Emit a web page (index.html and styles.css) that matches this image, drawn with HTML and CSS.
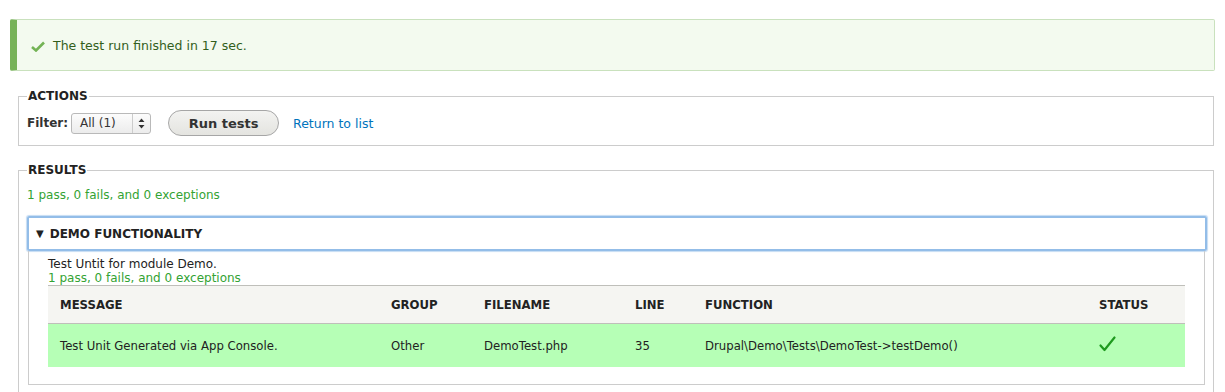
FILE: index.html
```html
<!DOCTYPE html>
<html lang="en">
  <head>
    <meta charset="UTF-8" />
    <title>Test result</title>
    <link rel="stylesheet" href="styles.css">
  </head>
  <body>
    <div class="page">
      <div class="messages">
        <svg class="msg-icon" width="14" height="11" viewBox="0 0 14 11">
          <path d="M1 6 L5 9.5 L13 1.5" fill="none" stroke="#73b355" stroke-width="2.6" />
        </svg>
        <span>The test run finished in 17 sec.</span>
      </div>

      <fieldset class="box actions">
        <legend>Actions</legend>
        <div class="action-row">
          <label class="filter-label">Filter:</label>
          <span class="select">
            <span class="select-value">All (1)</span>
            <span class="select-arrows">
              <svg width="7" height="11" viewBox="0 0 7 11">
                <path d="M3.5 0.5 L6.5 4 L0.5 4 Z M3.5 10.5 L6.5 7 L0.5 7 Z" fill="#333" />
              </svg>
            </span>
          </span>
          <button class="button">Run tests</button>
          <a class="link" href="#">Return to list</a>
        </div>
      </fieldset>

      <fieldset class="box results">
        <legend>Results</legend>
        <div class="pass">1 pass, 0 fails, and 0 exceptions</div>

        <div class="details">
          <div class="summary"><span class="tri">&#9660;</span>Demo functionality</div>
          <div class="details-body">
            <div class="desc">Test Untit for module Demo.</div>
            <div class="pass">1 pass, 0 fails, and 0 exceptions</div>
            <table class="result-table">
              <thead>
                <tr>
                  <th class="c-msg">Message</th>
                  <th class="c-group">Group</th>
                  <th class="c-file">Filename</th>
                  <th class="c-line">Line</th>
                  <th class="c-func">Function</th>
                  <th class="c-status">Status</th>
                </tr>
              </thead>
              <tbody>
                <tr class="row-pass">
                  <td>Test Unit Generated via App Console.</td>
                  <td>Other</td>
                  <td>DemoTest.php</td>
                  <td>35</td>
                  <td>Drupal\Demo\Tests\DemoTest-&gt;testDemo()</td>
                  <td>
                    <svg width="17" height="16" viewBox="0 0 17 16">
                      <path d="M1.5 9.5 L5.5 14 L15.5 1.5" fill="none" stroke="#1f9a1f" stroke-width="2.2" stroke-linecap="round" stroke-linejoin="round" />
                    </svg>
                  </td>
                </tr>
              </tbody>
            </table>
          </div>
        </div>
      </fieldset>
    </div>
  </body>
</html>
```

FILE: styles.css
```css
html,
body {
  margin: 0;
  background: #fff;
}
body {
  font-family: "DejaVu Sans", "Liberation Sans", sans-serif;
  font-size: 12px;
  color: #333;
}
.page {
  padding: 19px 10px 0 10px;
}
/* status message */
.messages {
  display: flex;
  align-items: center;
  height: 50px;
  border: 1px solid #c9e1bd;
  border-left: 7px solid #77b259;
  border-radius: 2px;
  background: #f3faef;
  color: #325e1c;
  padding-left: 14px;
  font-size: 12.5px;
}
.msg-icon {
  margin-right: 8px;
  margin-top: 2px;
}
/* fieldsets */
.box {
  margin: 18px 1px 0 8px;
  padding: 0 6px 0 8px;
  border: 1px solid #ccc;
}
.box legend {
  padding: 0 1px;
  font-weight: bold;
  text-transform: uppercase;
  color: #222;
}
.actions {
  padding-bottom: 9px;
}
.action-row {
  display: flex;
  align-items: center;
  margin-top: 7px;
}
.filter-label {
  font-weight: bold;
  margin-right: 3px;
}
.select {
  display: flex;
  align-items: center;
  width: 78px;
  height: 19px;
  border: 1px solid #b9b9b9;
  border-radius: 3px;
  background: linear-gradient(#fcfcfc, #ececec);
}
.select-value {
  flex: 1;
  padding-left: 8px;
}
.select-arrows {
  display: flex;
  align-items: center;
  justify-content: center;
  width: 17px;
  height: 100%;
  border-left: 1px solid #ccc;
}
.button {
  margin-left: 17px;
  width: 111px;
  height: 26px;
  border: 1px solid #a6a6a6;
  border-radius: 14px;
  background: linear-gradient(#f3f3f1, #e4e4e0);
  font-family: inherit;
  font-size: 13px;
  font-weight: bold;
  color: #333;
}
.link {
  margin-left: 14px;
  color: #0074bd;
  text-decoration: none;
  font-size: 12.5px;
}
.results {
  margin-top: 17px;
  padding-bottom: 40px;
}
.pass {
  color: #33a333;
}
.results > .pass {
  margin-top: 11px;
}
/* collapsible block */
.details {
  margin-top: 14px;
}
.summary {
  box-sizing: border-box;
  height: 35px;
  display: flex;
  align-items: center;
  border: 2px solid #93bde8;
  border-radius: 2px;
  box-shadow: 0 0 1px 1px #c5dcf3;
  padding-left: 7px;
  font-weight: bold;
  text-transform: uppercase;
  color: #222;
}
.tri {
  font-size: 10px;
  margin-right: 6px;
}
.details-body {
  margin: 0 2px 0 1px;
  border: 1px solid #ccc;
  border-top: none;
  padding: 6px 19px 17px 19px;
}
.desc {
  color: #222;
}
/* result table */
.result-table {
  width: 100%;
  border-collapse: collapse;
  font-size: 11.7px;
}
.result-table th {
  text-align: left;
  font-weight: bold;
  text-transform: uppercase;
  color: #222;
  background: #f5f5f2;
  border-top: 1px solid #bfbfba;
  border-bottom: 1px solid #bfbfba;
  height: 37px;
  padding: 0 12px;
}
.result-table td {
  height: 43px;
  padding: 0 12px;
  color: #222;
}
.row-pass {
  background: #b6ffb6;
}
.c-msg { width: 307px; }
.c-group { width: 69px; }
.c-file { width: 127px; }
.c-line { width: 46px; }
.c-func { width: 370px; }
```
